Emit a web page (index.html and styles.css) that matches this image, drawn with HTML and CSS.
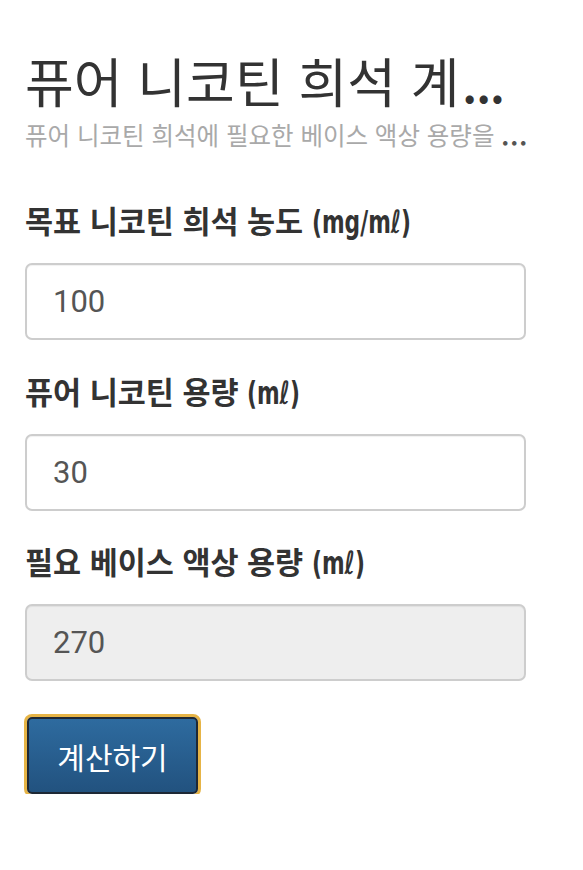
FILE: index.html
```html
<!DOCTYPE html>
<html lang="ko">
<head>
<meta charset="utf-8">
<link rel="stylesheet" href="styles.css">
</head>
<body>
<main class="page">
  <h1 class="title">퓨어 니코틴 희석 계<span class="dots">...</span></h1>
  <p class="subtitle">퓨어 니코틴 희석에 필요한 베이스 액상 용량을 <span class="dots">...</span></p>
  <div class="field">
    <label class="label">목표 니코틴 희석 농도 <span class="unit">(mg/mℓ)</span></label>
    <input class="input" type="text" value="100">
  </div>
  <div class="field">
    <label class="label">퓨어 니코틴 용량 <span class="unit">(mℓ)</span></label>
    <input class="input" type="text" value="30">
  </div>
  <div class="field">
    <label class="label">필요 베이스 액상 용량 <span class="unit">(mℓ)</span></label>
    <input class="input readonly" type="text" value="270" readonly>
  </div>
  <button class="btn" type="button">계산하기</button>
</main>
</body>
</html>
```
FILE: styles.css
```css
html, body { margin: 0; padding: 0; background: #fff; }
body { font-family: "Noto Sans CJK KR", "Noto Sans", sans-serif; color: #333; }
.page { width: 501px; margin-left: 25px; padding-top: 49px; }
.title { margin: 0; font-size: 53px; font-weight: 400; line-height: 62px; white-space: nowrap; color: #333; }
.title .dots { font-size: 44px; line-height: 0; font-weight: 700; letter-spacing: -0.5px; margin-left: 3px; }
.subtitle { margin: 9px 0 0; font-size: 24.5px; line-height: 30px; color: #a9a9a9; white-space: nowrap; }
.subtitle .dots { font-weight: 700; color: #555; letter-spacing: 1px; }
.field { margin-top: 52px; }
.field + .field { margin-top: 32.5px; }
.label { display: block; font-size: 30.5px; font-weight: 700; line-height: 36px; color: #333; white-space: nowrap; }
.unit { display: inline-block; font-family: "DejaVu Sans", sans-serif; font-weight: 700; font-size: 32px; transform: scaleX(0.68); transform-origin: left center; }
.input { display: block; box-sizing: border-box; width: 501px; height: 77px; margin-top: 23px; padding: 0 26px; border: 2px solid #cdcdcd; border-radius: 7px; background: #fff; font-family: Roboto, sans-serif; font-size: 31px; color: #555; outline: none; box-shadow: inset 0 1px 1px rgba(0,0,0,0.06); }
.readonly { background: #eee; }
.btn { display: block; box-sizing: border-box; margin-top: 36px; margin-left: 2px; width: 171px; height: 77px; border: 2px solid #1e2835; border-radius: 5px; box-shadow: 0 0 0 3px #e6b446; background: linear-gradient(#2e6b9f, #22527f); color: #fff; font-family: "Noto Sans CJK KR", sans-serif; font-size: 30px; font-weight: 400; padding: 0; }
```
